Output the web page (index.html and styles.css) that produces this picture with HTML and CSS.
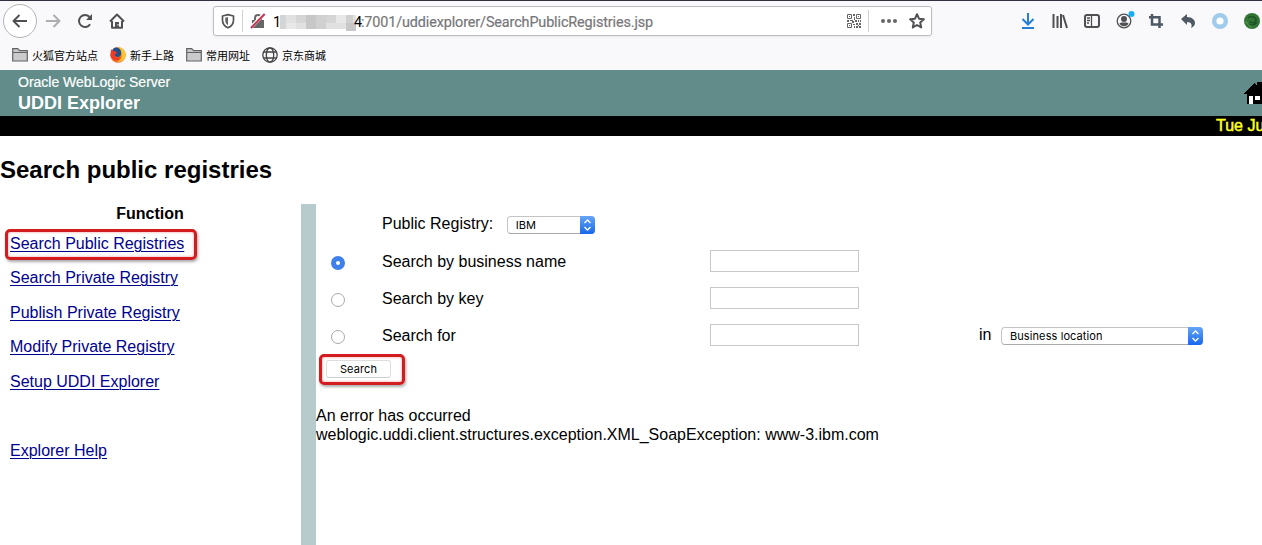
FILE: index.html
```html
<!DOCTYPE html>
<html lang="en">
<head>
<meta charset="utf-8">
<title>UDDI Explorer</title>
<link rel="stylesheet" href="styles.css">
</head>
<body>
<header class="chrome">
  <div class="toolbar">
    <div class="nav">
      <span class="back"><svg class="ico" viewBox="0 0 16 16"><path class="line" d="M15 8H1.500M7.500 2 1.500 8l6 6"/></svg></span>
      <svg class="ico forward" viewBox="0 0 16 16"><path class="line" d="M1 8h13.500M8.500 2l6 6-6 6"/></svg>
      <svg class="ico reload" viewBox="0 0 16 16"><path class="line" d="M13.100 11.200A6 6 0 1 1 12.500 4"/><path class="fill" d="M15 1v6H9z"/></svg>
      <svg class="ico home" viewBox="0 0 16 16"><path class="line" d="M1 8.500 8 1.500l7 7M3 8v6.700h10V8"/><path class="fill" d="M6 9h4v5.500H6z"/><path d="M8.500 11h1v1.500h-1z" fill="#fff"/></svg>
    </div>
    <div class="urlbar">
      <svg class="shield" viewBox="0 0 14 16"><path d="M7 1.600 12.500 3v4.200c0 3.600-1.800 6-5.500 7.600-3.700-1.600-5.500-4-5.500-7.600V3z" fill="none" stroke="#555" stroke-width="1.700" stroke-linejoin="round"/><path d="M7 4v8.200C5 11 4.200 9.400 4.200 7V4.700z" fill="#666"/></svg>
      <i class="sep"></i>
      <svg class="lock" viewBox="0 0 16 16"><path d="M5 7V5a3 3 0 0 1 6 0v2" fill="none" stroke="#666" stroke-width="2"/><path d="M2 7h12v8H2z" fill="#666"/><path d="M.8 14.500 14.200.8" stroke="#fff" stroke-width="3.500"/><path d="M1 15 14.700 1" stroke="#c9304f" stroke-width="2"/></svg>
      <span class="host">1</span>
      <svg class="mosaic" viewBox="0 0 76 16"><path fill="#e1e1e1" d="M0 0h76v16H0z"/><path fill="#d5d5d5" d="M0 0h6v14H0zM16 0h10v8H16zM46 0h10v8H46z"/><path fill="#c7c7c7" d="M26 0h10v14H26zM66 8h10v8H66z"/><path fill="#d0d0d0" d="M36 0h10v14H36zM66 0h7v8h-7z"/><path fill="#e8e8e8" d="M6 8h10v6H6zM56 0h10v8H56z"/><path fill="#fff" d="M0 14h66v2H0z"/></svg>
      <span class="host four">4</span><span class="path">:7001/uddiexplorer/SearchPublicRegistries.jsp</span>
      <svg class="qr" viewBox="0 0 14 14"><path fill="none" stroke="#666" d="M.5.500h4v4h-4zM9.500.500h4v4h-4zM.5 9.500h4v4h-4z"/><path fill="#666" d="M2 2h1v1H2zM11 2h1v1h-1zM2 11h1v1H2zM6 0h2v2H6zM7 3h1v3H7zM0 6h2v2H0zM3 6h3v1H3zM5 7h2v2H5zM8 6h2v2H8zM11 6h1v2h-1zM13 6h1v2h-1zM6 10h2v1H6zM7 12h1v2H7zM9 9h2v2H9zM12 9h2v2h-2zM11 11h1v1h-1zM9 12h2v2H9zM12 12h2v2h-2z"/></svg>
      <i class="sep right"></i>
      <svg class="dots" viewBox="0 0 16 16"><g fill="#666"><circle cx="2" cy="8" r="2"/><circle cx="8" cy="8" r="2"/><circle cx="14" cy="8" r="2"/></g></svg>
      <svg class="ico star" viewBox="0 0 16 16"><path class="line" d="m8 1.200 2 4.500 4.900.5-3.700 3.300 1 4.900L8 12l-4.200 2.400 1-4.900L1.100 6.200 6 5.700z"/></svg>
    </div>
    <div class="tools">
      <svg class="ico" viewBox="0 0 16 16"><path d="M8 0v11M2.500 6 8 11.500 13.500 6M2 15h12" fill="none" stroke="#2580d5" stroke-width="2"/></svg>
      <svg class="ico" viewBox="0 0 16 16"><path class="line" d="M1.500 1v14M5.500 3v12M9 1v14M11 2l4 13"/></svg>
      <svg class="ico" viewBox="0 0 16 16"><rect class="line" x="1" y="2" width="14" height="12" rx="2"/><path class="line thin" d="M7.500 2v12M3 5h3M3 7.500h3M3 10h2"/></svg>
      <svg class="ico" viewBox="0 0 16 16"><circle class="line thin" cx="8" cy="8" r="6.800"/><circle class="fill" cx="8" cy="6" r="3"/><path class="fill" d="M3.500 10.500C5 9 6 9.500 8 9.500s3-.5 4.500 1c-1.500 3.500-7.500 3.500-9 0z"/><circle cx="15.500" cy="1" r="3" fill="#18aef4"/></svg>
      <svg class="ico" viewBox="0 0 16 16"><path d="M4 1v10.500h11M1 4.200h10.500V15" fill="none" stroke="#4e5963" stroke-width="2.500"/></svg>
      <svg class="ico" viewBox="0 0 16 16"><path d="M1 6 7 1v3c5 0 8 3 8 6 0 2-1.500 4-4 5 1.500-3 .5-6-4-6v3z" fill="#4e5963"/></svg>
      <svg class="ico" viewBox="0 0 16 16"><circle cx="8" cy="8" r="5.800" fill="#fff" stroke="#a0cbea" stroke-width="4.400"/></svg>
      <svg class="ico" viewBox="0 0 16 16"><circle cx="8" cy="8" r="8" fill="#337536"/><path d="M4 5c3-3 8-1 8 2s-5 4-6 1M5 11c2 2 6 1 8-2" fill="none" stroke="#1d5425" stroke-width="1.500"/><path d="M2 8c1 3 3 5 6 6" fill="none" stroke="#55a04c"/></svg>
    </div>
  </div>
  <div class="bookmarks">
    <svg class="ico" viewBox="0 0 16 16"><path class="folder" d="M.7 14V1.700h5l2 2h7.600V14zM.7 5.500h14.600"/></svg><span>火狐官方站点</span>
    <svg class="ico fox" viewBox="0 0 16 16"><circle cx="8" cy="8" r="7.700" fill="#f36b26"/><path d="M8 0c6 1 9 6 7 11-2 3-5 4-8 4 5-2 6-7 3-11z" fill="#ffc72b"/><path d="M3 2c3-3 7-1 8 2 1 4-1 6-4 6-3-1-3-3-5-4z" fill="#20508e"/><path d="M1 2c2 3 4 1 6 4L4.500 8c1 3 4 3 6 2-1 4-7 5-10-1z" fill="#ed3b27"/></svg><span>新手上路</span>
    <svg class="ico" viewBox="0 0 16 16"><path class="folder" d="M.7 14V1.700h5l2 2h7.600V14zM.7 5.500h14.600"/></svg><span>常用网址</span>
    <svg class="ico" viewBox="0 0 16 16"><g fill="none" stroke="#444" stroke-width="1.300"><circle cx="8" cy="8" r="7.200"/><ellipse cx="8" cy="8" rx="3.700" ry="7.200"/><path d="M1.500 5h13M1.500 11h13"/></g></svg><span>京东商城</span>
  </div>
</header>
<div class="banner">
  <div><div class="product">Oracle WebLogic Server</div><div class="app">UDDI Explorer</div></div>
  <svg class="house" viewBox="0 0 18 22" shape-rendering="crispEdges"><path d="M0 12 10 1l3 3V0h5v22H3V12z"/><path fill="#fff" d="M5 14h4v8H5zM11 14h5v4h-5z"/></svg>
</div>
<div class="datebar"><span>Tue Ju</span></div>
<h1>Search public registries</h1>
<main>
  <nav class="functions">
    <h2>Function</h2>
    <a class="marked">Search Public Registries</a>
    <a>Search Private Registry</a>
    <a>Publish Private Registry</a>
    <a>Modify Private Registry</a>
    <a>Setup UDDI Explorer</a>
    <a class="help">Explorer Help</a>
  </nav>
  <section class="content">
    <div class="row registry"><span></span><div class="choice">Public Registry:<span class="select ibm">IBM<b><svg viewBox="0 0 15 18"><path d="m4.500 7 3-3 3 3M4.500 11l3 3 3-3"/></svg></b></span></div></div>
    <div class="row"><i class="radio on"></i><span>Search by business name</span><i class="field"></i></div>
    <div class="row"><i class="radio"></i><span>Search by key</span><i class="field"></i></div>
    <div class="row"><i class="radio"></i><span>Search for</span><i class="field"></i><div class="choice in">in<span class="select location">Business location<b><svg viewBox="0 0 15 18"><path d="m4.500 7 3-3 3 3M4.500 11l3 3 3-3"/></svg></b></span></div></div>
    <div class="action"><button>Search</button></div>
    <p>An error has occurred<br>weblogic.uddi.client.structures.exception.XML_SoapException: www-3.ibm.com</p>
  </section>
</main>
</body>
</html>
```

FILE: styles.css
```css
* { box-sizing: border-box; }
body { margin: 0; height: 545px; overflow: hidden; background: #fff; color: #000; font: 16px/19px "Liberation Sans", Arial, sans-serif; display: flex; flex-direction: column; }
svg { display: block; flex: none; overflow: visible; }
.ico { width: 16px; height: 16px; }
.line { fill: none; stroke: #505054; stroke-width: 2; stroke-linejoin: round; }
.thin { stroke-width: 1.3; }
.fill { fill: #505054; }
.chrome { height: 70px; flex: none; background: #f9f9fb; border-top: 1px solid #30303e; }
.toolbar { height: 40px; display: flex; align-items: center; }
.nav { width: 213px; padding-left: 3px; display: flex; align-items: center; }
.back { width: 34px; height: 34px; border: 1px solid #b4b4b6; border-radius: 50%; background: #fff; display: flex; align-items: center; justify-content: center; }
.forward { margin-left: 8px; opacity: .45; }
.reload { margin-left: 16px; }
.home { margin-left: 16px; }
.urlbar { width: 719px; height: 30px; border: 1px solid #bdbdc0; border-radius: 3px; background: #fff; box-shadow: 0 1px 3px #0001; display: flex; align-items: center; padding-left: 7px; font: 14.4px/20px Roboto, sans-serif; }
.shield { width: 14px; height: 16px; }
.sep { width: 1px; height: 22px; background: #d2d2d5; margin: 0 7px; }
.lock { width: 16px; height: 16px; }
.host { margin: 3px 0 0 7px; width: 7px; }
.mosaic { width: 76px; height: 16px; margin-top: 3px; }
.four { margin-left: -2px; width: 7px; }
.path { color: #77777a; width: 293px; margin-top: 3px; letter-spacing: -.12px; white-space: nowrap; -webkit-text-stroke: .2px; }
.qr { width: 14px; height: 14px; margin-left: auto; }
.right { margin: 0 12px 0 7px; }
.dots { width: 16px; height: 16px; margin-right: 12px; }
.star { margin-right: 6px; }
.tools { margin-left: 88px; display: flex; gap: 16px; }
.bookmarks { height: 28px; padding-left: 12px; display: flex; align-items: center; font: 11px/16px "Noto Sans CJK SC", sans-serif; }
.bookmarks span { margin: -1px 12px 0 4px; white-space: nowrap; }
.folder { fill: #cacacc; stroke: #626266; stroke-width: 1.2; }
.banner { height: 46px; flex: none; background: #618c89; color: #fff; padding: 3px 0 0 18px; display: flex; justify-content: space-between; }
.product { font-size: 14px; line-height: 18px; -webkit-text-stroke: .2px; }
.app { font-weight: bold; font-size: 18px; line-height: 24px; }
.house { width: 18px; height: 22px; margin-top: 9px; }
.datebar { height: 20px; flex: none; background: #000; color: #ffff26; padding-left: 1216px; white-space: nowrap; line-height: 20px; -webkit-text-stroke: .5px; }
h1 { margin: 19px 0 20px; font-size: 24px; line-height: 29px; flex: none; }
main { flex: 1; display: flex; min-height: 0; }
.functions { width: 301px; flex: none; display: flex; flex-direction: column; align-items: flex-start; padding-left: 10px; }
h2 { font-size: 16px; line-height: 19px; margin: 0 0 6px; width: 280px; text-align: center; }
.functions a { color: #000090; text-decoration: underline; text-underline-offset: 2px; text-decoration-thickness: 1px; margin-bottom: 15.5px; }
.functions .marked { height: 31px; width: 192px; margin: 0 0 8.200px -5px; padding: 2px; }
.marked, .action { border: 3px solid #d31c1f; border-radius: 5px; box-shadow: 1px 2px 3px #0005, inset 0 0 3px #d006; }
.functions .help { margin-top: 35px; }
.content { flex: 1; border-left: 15px solid #b7cbcc; }
.row { height: 37px; display: grid; grid-template-columns: 66px 328px 269px 1fr; align-items: center; }
.registry { height: 38px; grid-template-columns: 66px 1fr; }
.choice { display: flex; align-items: center; }
.row > span { margin-top: 1px; }
.select { height: 18px; border: 1px solid #c4c4c6; border-bottom-color: #aaa; border-radius: 4px; font: 11px/17px Inter, sans-serif; padding-left: 7.500px; display: flex; justify-content: space-between; margin-top: 3px; letter-spacing: .1px; }
.select b { width: 15px; height: 18px; margin: -1px; border-radius: 0 4px 4px 0; background: linear-gradient(#65a5f9, #1767ee); }
.select svg { width: 15px; height: 18px; fill: none; stroke: #fff; stroke-width: 1.4; }
.ibm { width: 88px; margin-left: 14px; }
.location { width: 202px; margin-left: 10px; margin-top: 2px; }
.radio { width: 14px; height: 14px; margin: 4px 0 0 15px; border: 1px solid #aaa; border-radius: 50%; }
.on { border: 5px solid #3e80ec; }
.field { width: 149px; height: 22px; border: 1px solid #c8c8c8; }
.action { width: 86px; height: 31px; margin: 1px 0 0 3px; padding: 3px 4px; display: flex; }
button { width: 65px; height: 18px; border: 1px solid #ddd; border-bottom-color: #ccc; border-radius: 3px; background: #fff; color: #000; padding: 0; font: 11px/15px Inter, sans-serif; letter-spacing: .1px; }
p { margin: 21px 0 0; }
```
